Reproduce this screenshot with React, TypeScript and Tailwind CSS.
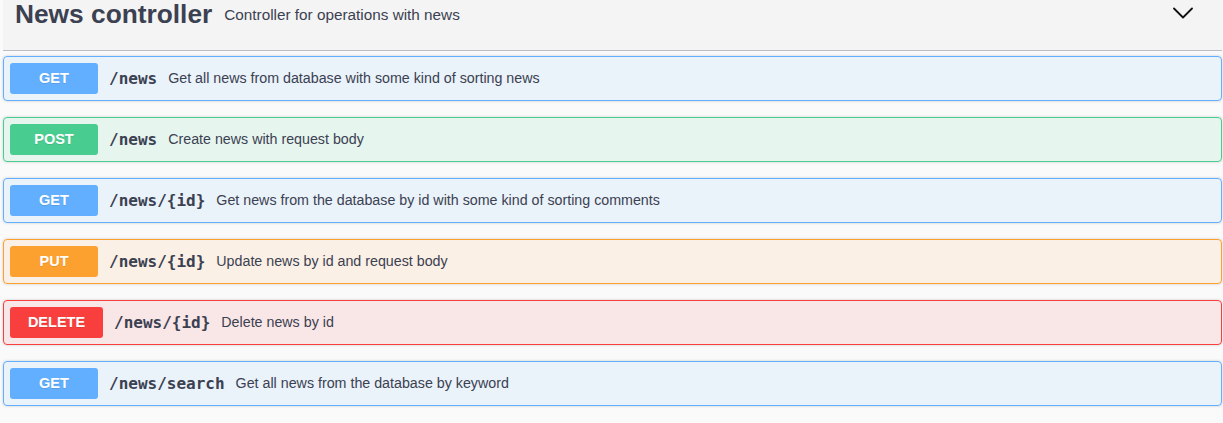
import React from "react"

type Method = "GET" | "POST" | "PUT" | "DELETE"

interface Operation {
    method: Method
    path: string
    summary: string
}

const operations: Operation[] = [
    { method: "GET", path: "/news", summary: "Get all news from database with some kind of sorting news" },
    { method: "POST", path: "/news", summary: "Create news with request body" },
    { method: "GET", path: "/news/{id}", summary: "Get news from the database by id with some kind of sorting comments" },
    { method: "PUT", path: "/news/{id}", summary: "Update news by id and request body" },
    { method: "DELETE", path: "/news/{id}", summary: "Delete news by id" },
    { method: "GET", path: "/news/search", summary: "Get all news from the database by keyword" },
]

const blockStyles: Record<Method, string> = {
    GET: "border-[#61affe] bg-[#61affe]/10",
    POST: "border-[#49cc90] bg-[#49cc90]/10",
    PUT: "border-[#fca130] bg-[#fca130]/10",
    DELETE: "border-[#f93e3e] bg-[#f93e3e]/10",
}

const badgeStyles: Record<Method, string> = {
    GET: "bg-[#61affe] w-[88px]",
    POST: "bg-[#49cc90] w-[88px]",
    PUT: "bg-[#fca130] w-[88px]",
    DELETE: "bg-[#f93e3e] w-[93px]",
}

function OperationRow({ op }: { op: Operation }) {
    return (
        <div
            className={`flex h-[45px] items-center rounded-[4px] border pl-[6px] shadow-[0_0_3px_rgba(0,0,0,0.19)] ${blockStyles[op.method]}`}
        >
            <span
                className={`flex h-[31px] shrink-0 items-center justify-center rounded-[3px] font-['Liberation_Sans',Arial,sans-serif] text-[14.5px] font-bold text-white [text-shadow:0_1px_0_rgba(0,0,0,0.1)] ${badgeStyles[op.method]}`}
            >
                {op.method}
            </span>
            <span className="pl-[11px] pr-[11px] font-['DejaVu_Sans_Mono',monospace] text-[16px] font-bold text-[#3b4151]">
                {op.path}
            </span>
            <span className="font-['Liberation_Sans',Arial,sans-serif] text-[14.25px] text-[#3b4151]">
                {op.summary}
            </span>
        </div>
    )
}

export default function App() {
    return (
        <div className="h-[423px] w-full overflow-hidden bg-[#fafafa] pl-[3px] pr-[1px]">
            <div className="flex h-[51px] items-start border-b border-[#bcbec3] bg-[#f4f4f4] pl-[12px] pr-[29px]">
                <div className="flex h-[29px] items-center text-[#3b4151]">
                    <span className="font-['Liberation_Sans',Arial,sans-serif] text-[26.3px] font-bold leading-[29px]">
                        News controller
                    </span>
                    <span className="pl-[12px] pt-[1px] font-['Liberation_Sans',Arial,sans-serif] text-[15.3px]">
                        Controller for operations with news
                    </span>
                </div>
                <svg className="ml-auto mt-[7px]" width="20" height="12" viewBox="0 0 20 12" fill="none">
                    <path d="M1 1.5 L10 10.5 L19 1.5" stroke="#111" strokeWidth="1.8" strokeLinecap="round" strokeLinejoin="round" />
                </svg>
            </div>
            <div className="mt-[5px] flex flex-col gap-[16px]">
                {operations.map((op, i) => (
                    <OperationRow key={i} op={op} />
                ))}
            </div>
        </div>
    )
}
